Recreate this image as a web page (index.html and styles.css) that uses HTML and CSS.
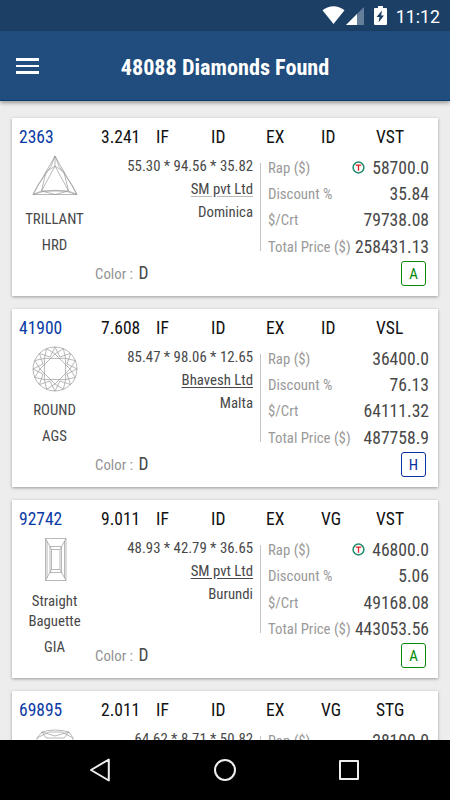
FILE: index.html
```html
<!DOCTYPE html>
<html>
	<head>
		<meta charset="UTF-8">
		<title>Diamonds</title>
		<link rel="stylesheet" href="styles.css">
	</head>
	<body>
		<div class="statusbar">
			<svg class="wifi" width="23" height="19" viewBox="0 0 23 19"><path d="M0.5 4.2Q11.5 -3.6 22.5 4.2L11.5 18Z" fill="#fff"/></svg>
			<svg class="signal" width="18" height="18" viewBox="0 0 18 18"><path d="M0 18L18 0V18Z" fill="#657f9b"/><path d="M0 18L11 7V18Z" fill="#fff"/></svg>
			<svg class="battery" width="13" height="19" viewBox="0 0 13 19"><path d="M1 2h3V0h5v2h3q1 0 1 1v15q0 1-1 1H1q-1 0-1-1V3q0-1 1-1Z" fill="#fff"/><path d="M8 4.500L2.500 11H5.500L4.500 16.500L10 9.500H7.200Z" fill="#1c3f66"/></svg>
			<span class="time">11:12</span>
		</div>
		<div class="topbar">
			<div class="menu"><i></i><i></i><i></i></div>
			<h3>48088 Diamonds Found</h3>
		</div>
		<div class="list">
			<div class="card">
				<div class="head"><a>2363</a><span>3.241</span><span>IF</span><span>ID</span><span>EX</span><span>ID</span><span>VST</span></div>
				<div class="body">
					<div class="shape">
						<svg width="46" height="46" viewBox="0 0 46 46"><g class="line"><path d="M23 1L45 39.500H1Z"/><path d="M23 11L9.500 36H36.500Z"/><path d="M23 1Q20 12 13 20Q5 30 1 39.500Q23 31 45 39.500Q41 30 33 20Q26 12 23 1Z"/><path d="M23 1V11M1 39.500L9.500 36L23 39.500L36.500 36L45 39.500M23 11L14 17L9.500 36M23 11L32 17L36.500 36"/></g></svg>
						<p>TRILLANT</p>
						<p class="lab">HRD</p>
					</div>
					<div class="info">
						<p>55.30 * 94.56 * 35.82</p>
						<p><u class="soft">SM pvt Ltd</u></p>
						<p>Dominica</p>
						<div class="color">Color : <b>D</b></div>
					</div>
					<div class="price">
						<dl>
							<dt>Rap ($)</dt><dd><svg class="trade" width="13" height="13" viewBox="0 0 13 13"><circle cx="6.500" cy="6.500" r="5.400"/><path d="M3.700 4.200H9.300M6.500 4.200V9.800"/></svg>58700.0</dd>
							<dt>Discount %</dt><dd>35.84</dd>
							<dt>$/Crt</dt><dd>79738.08</dd>
							<dt>Total Price ($)</dt><dd>258431.13</dd>
						</dl>
						<span class="tag green">A</span>
					</div>
				</div>
			</div>
			<div class="card">
				<div class="head"><a>41900</a><span>7.608</span><span>IF</span><span>ID</span><span>EX</span><span>ID</span><span>VSL</span></div>
				<div class="body">
					<div class="shape">
						<svg width="46" height="46" viewBox="0 0 46 46"><g class="line"><circle cx="23" cy="23" r="22"/><path d="M23 8L38 23L23 38L8 23Z"/><path d="M12.400 12.400H33.600V33.600H12.400Z"/><path d="M23 1L28 11L38.600 7.400L35 18L45 23L35 28L38.600 38.600L28 35L23 45L18 35L7.400 38.600L11 28L1 23L11 18L7.400 7.400L18 11Z"/><path d="M23 8L31.400 2.700L33.600 12.400L43.300 14.600L38 23L43.300 31.400L33.600 33.600L31.400 43.300L23 38L14.600 43.300L12.400 33.600L2.700 31.400L8 23L2.700 14.600L12.400 12.400L14.600 2.700Z"/></g></svg>
						<p>ROUND</p>
						<p class="lab">AGS</p>
					</div>
					<div class="info">
						<p>85.47 * 98.06 * 12.65</p>
						<p><u>Bhavesh Ltd</u></p>
						<p>Malta</p>
						<div class="color">Color : <b>D</b></div>
					</div>
					<div class="price">
						<dl>
							<dt>Rap ($)</dt><dd>36400.0</dd>
							<dt>Discount %</dt><dd>76.13</dd>
							<dt>$/Crt</dt><dd>64111.32</dd>
							<dt>Total Price ($)</dt><dd>487758.9</dd>
						</dl>
						<span class="tag blue">H</span>
					</div>
				</div>
			</div>
			<div class="card">
				<div class="head"><a>92742</a><span>9.011</span><span>IF</span><span>ID</span><span>EX</span><span>VG</span><span>VST</span></div>
				<div class="body">
					<div class="shape">
						<svg width="46" height="46" viewBox="0 0 46 46"><g class="line"><path d="M13.500 1.500H34V43.500H13.500Z"/><path d="M18 9.500H29.500V35.500H18Z"/><path d="M19.500 12.500H28V32.500H19.500Z"/><path d="M13.500 1.500L19.500 12.500M34 1.500L28 12.500M13.500 43.500L19.500 32.500M34 43.500L28 32.500M15 4V41M32.500 4V41"/></g></svg>
						<p>Straight<br>Baguette</p>
						<p class="lab">GIA</p>
					</div>
					<div class="info">
						<p>48.93 * 42.79 * 36.65</p>
						<p><u>SM pvt Ltd</u></p>
						<p>Burundi</p>
						<div class="color">Color : <b>D</b></div>
					</div>
					<div class="price">
						<dl>
							<dt>Rap ($)</dt><dd><svg class="trade" width="13" height="13" viewBox="0 0 13 13"><circle cx="6.500" cy="6.500" r="5.400"/><path d="M3.700 4.200H9.300M6.500 4.200V9.800"/></svg>46800.0</dd>
							<dt>Discount %</dt><dd>5.06</dd>
							<dt>$/Crt</dt><dd>49168.08</dd>
							<dt>Total Price ($)</dt><dd>443053.56</dd>
						</dl>
						<span class="tag green">A</span>
					</div>
				</div>
			</div>
			<div class="card">
				<div class="head"><a>69895</a><span>2.011</span><span>IF</span><span>ID</span><span>EX</span><span>VG</span><span>STG</span></div>
				<div class="body">
					<div class="shape">
						<svg width="46" height="46" viewBox="0 0 46 46"><g class="line"><path d="M10 4Q23 0 37 4L41 10V36L36 42H10L5 36V10Z"/><path d="M10 4L23 8L37 4M5 10L17 4L30 4L41 10M10 4L14 10H32L37 4"/></g></svg>
					</div>
					<div class="info">
						<p>64.62 * 8.71 * 50.82</p>
					</div>
					<div class="price">
						<dl>
							<dt>Rap ($)</dt><dd>28100.0</dd>
						</dl>
					</div>
				</div>
			</div>
		</div>
		<div class="navbar">
			<svg width="22" height="24" viewBox="0 0 22 24"><path d="M19.800 1.500V22.500L2 12Z"/></svg>
			<svg width="24" height="24" viewBox="0 0 24 24"><circle cx="12" cy="12" r="10"/></svg>
			<svg width="20" height="20" viewBox="0 0 20 20"><path d="M1 1H19V19H1Z"/></svg>
		</div>
	</body>
</html>
```
FILE: styles.css
```css
*{
	margin: 0;
	padding: 0;
	box-sizing: border-box;
}
body{
	width: 450px;
	height: 800px;
	overflow: hidden;
	display: flex;
	flex-direction: column;
	background: #ededed;
	font-family: "Roboto Condensed", Roboto, sans-serif;
	font-stretch: 75%;
	color: #484848;
}
/*状态栏*/
.statusbar{
	flex: none;
	height: 31px;
	padding: 0 10px 0 0;
	display: flex;
	justify-content: flex-end;
	align-items: center;
	background: #1c3f66;
}
.wifi{
	margin-bottom: 1px;
}
.signal{
	margin: 1px 10px 0 1px;
}
.battery{
	margin-bottom: 1px;
}
.time{
	margin: 1px 0 0 9px;
	font-family: Roboto, sans-serif;
	font-stretch: 100%;
	font-size: 17.8px;
	font-weight: 400;
	color: #fff;
}
/*标题栏*/
.topbar{
	flex: none;
	height: 70px;
	padding: 3px 16px 0;
	display: flex;
	align-items: center;
	background: #204d7e;
	border-bottom: 1px solid #0c3c70;
	box-shadow: 0 2px 4px rgba(0,0,0,.35);
}
.menu{
	width: 23px;
	margin-bottom: 2px;
	display: flex;
	flex-direction: column;
	gap: 4px;
}
.menu i{
	height: 2.5px;
	background: #fff;
}
.topbar h3{
	flex: 1;
	margin-right: 23px;
	text-align: center;
	font-size: 22.2px;
	font-weight: 700;
	color: #fff;
}
.list{
	flex: 1;
	min-height: 0;
	overflow: hidden;
	padding: 16.5px 12px 0;
	display: flex;
	flex-direction: column;
	gap: 12.7px;
}
.card{
	flex: none;
	height: 178.5px;
	background: #fff;
	box-shadow: 0 1px 3px rgba(0,0,0,.35);
}
.head{
	height: 37px;
	padding: 1px 0 0 7px;
	display: grid;
	grid-template-columns: 82px 55px 55px 55px 55px 55px 1fr;
	align-items: center;
	font-size: 17.5px;
	color: #111;
}
.head a{
	color: #0a3aa5;
}
.body{
	display: flex;
}
.shape{
	width: 83px;
	padding-left: 2px;
	text-align: center;
	font-size: 14.8px;
	line-height: 20px;
}
.shape svg{
	display: block;
	margin: 0 auto 8.5px;
}
.lab{
	margin-top: 6px;
}
.line{
	fill: none;
	stroke: #999;
	stroke-width: .7;
}
.info{
	width: 158px;
	text-align: right;
	font-size: 14.8px;
	line-height: 23px;
}
.info u{
	text-underline-offset: 2px;
}
.soft{
	text-decoration-color: #bbb;
}
.color{
	margin-top: 38px;
	text-align: left;
	color: #929292;
}
.color b{
	margin-left: 2px;
	font-size: 17.5px;
	font-weight: 400;
	color: #484848;
}
.price{
	width: 176px;
	padding-left: 7px;
}
.price dl{
	border-left: 1px solid #c4c4c4;
	height: 88px;
	margin-top: 8px;
	padding-left: 7px;
	display: grid;
	grid-template-columns: auto 1fr;
	grid-auto-rows: 26.4px;
	white-space: nowrap;
}
.price dt,
.price dd{
	margin-top: -8px;
	line-height: 26px;
}
.price dt{
	font-size: 14.8px;
	color: #999;
}
.price dd{
	text-align: right;
	font-size: 17.6px;
}
.trade{
	margin-right: 7px;
	fill: none;
	stroke: #e02020;
	stroke-width: 1.3;
}
.trade circle{
	stroke: #1b8a6b;
	stroke-width: 1.5;
}
.tag{
	display: block;
	width: 25px;
	height: 25px;
	margin: 10px 3px 0 auto;
	border: 1px solid;
	border-radius: 3px;
	text-align: center;
	font-size: 15px;
	line-height: 24px;
}
.green{
	color: #078a07;
}
.blue{
	color: #0a2fa0;
}
/*底部导航*/
.navbar{
	flex: none;
	height: 60px;
	padding: 0 91px 0 89px;
	display: flex;
	justify-content: space-between;
	align-items: center;
	background: #000;
}
.navbar svg{
	fill: none;
	stroke: #eee;
	stroke-width: 2;
	stroke-linejoin: round;
}
```
